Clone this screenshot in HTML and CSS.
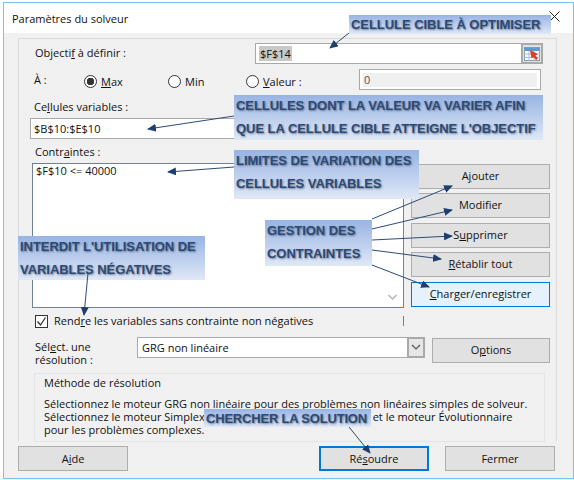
FILE: index.html
```html
<!DOCTYPE html>
<html lang="fr">
<head>
<meta charset="UTF-8" />
<meta name="viewport" content="width=device-width, initial-scale=1" />
<title>Paramètres du solveur</title>
<link rel="stylesheet" href="styles.css">
</head>
<body>

<div class="screen">
  <div class="dialog">
    <div class="titlebar">
      <span>Paramètres du solveur</span>
      <svg class="close" width="11" height="11" viewBox="0 0 11 11"><path d="M0.5 0.5L10.5 10.5M10.5 0.5L0.5 10.5" stroke="#222" fill="none"/></svg>
    </div>

    <div class="panel">
      <div class="row row-objectif">
        <label>Objecti<u>f</u> à définir :</label>
        <div class="field field-objectif">
          <span class="value selected">$F$14</span>
          <span class="picker">
            <svg width="16" height="14" viewBox="0 0 16 14">
              <rect x="0.5" y="0.5" width="15" height="13" fill="#fff" stroke="#7f9db9"/>
              <rect x="1" y="1" width="14" height="3" fill="#5b9bd5"/>
              <path d="M0 7H16M0 10.500H16M5 4V14M10 4V14" stroke="#a9bdd0" fill="none"/>
              <path d="M6 3L14 7L11.500 8.500L14 11.500L12 13L9.500 10L7.500 11.500Z" fill="#d8402c"/>
            </svg>
          </span>
        </div>
      </div>

      <div class="row row-radios">
        <label class="to-label">À :</label>
        <div class="radio radio-max"><span class="dot checked"></span><span><u>M</u>ax</span></div>
        <div class="radio radio-min"><span class="dot"></span><span>Min</span></div>
        <div class="radio radio-val"><span class="dot"></span><span><u>V</u>aleur :</span></div>
        <div class="field field-valeur"><span class="value disabled">0</span></div>
      </div>

      <label class="block-label label-cells">Ce<u>l</u>lules variables :</label>
      <div class="field field-cells"><span class="value">$B$10:$E$10</span></div>

      <label class="block-label label-contraintes">Contr<u>a</u>intes :</label>
      <div class="row row-list">
        <div class="listbox">
          <span class="list-item">$F$10 &lt;= 40000</span>
          <svg class="list-chevron" width="9" height="7" viewBox="0 0 9 7"><path d="M0.500 1L4.500 5L8.500 1" stroke="#b5b5b5" stroke-width="1.500" fill="none"/></svg>
        </div>
        <div class="list-buttons">
          <button>A<u>j</u>outer</button>
          <button>Modifier</button>
          <button>S<u>u</u>pprimer</button>
          <button><u>R</u>établir tout</button>
          <button class="hot"><u>C</u>harger/enregistrer</button>
        </div>
      </div>

      <div class="row row-check">
        <span class="checkbox">
          <svg width="11" height="11" viewBox="0 0 11 11"><path d="M1.500 5.500L4.500 9L9.500 1.500" stroke="#333" stroke-width="1.300" fill="none"/></svg>
        </span>
        <span class="check-text">Rend<u>r</u>e les variables sans contrainte non négatives</span>
        <span class="check-rule"></span>
      </div>

      <div class="row row-select">
        <label class="select-label">Sél<u>e</u>ct. une<br>résolution :</label>
        <div class="field field-select">
          <span class="value">GRG non linéaire</span>
          <span class="select-arrow">
            <svg width="10" height="7" viewBox="0 0 10 7"><path d="M1 1L5 5L9 1" stroke="#555" stroke-width="1.200" fill="none"/></svg>
          </span>
        </div>
        <button class="btn-options">O<u>p</u>tions</button>
      </div>

      <div class="method">
        <div class="method-title">Méthode de résolution</div>
        <p>Sélectionnez le moteur GRG non linéaire pour des problèmes non linéaires simples de solveur.<br>
        Sélectionnez le moteur Simplex<span class="method-gap"></span>et le moteur Évolutionnaire<br>
        pour les problèmes complexes.</p>
      </div>
    </div>

    <div class="footer">
      <button class="btn-foot">A<u>i</u>de</button>
      <button class="btn-foot btn-default">Ré<u>s</u>oudre</button>
      <button class="btn-foot">Fermer</button>
    </div>
  </div>

  <div class="note note-target">CELLULE CIBLE À OPTIMISER</div>
  <div class="note note-cells">CELLULES DONT LA VALEUR VA VARIER AFIN<br>QUE LA CELLULE CIBLE ATTEIGNE L'OBJECTIF</div>
  <div class="note note-limits">LIMITES DE VARIATION DES<br>CELLULES VARIABLES</div>
  <div class="note note-manage">GESTION DES<br>CONTRAINTES</div>
  <div class="note note-negative">INTERDIT L'UTILISATION DE<br>VARIABLES NÉGATIVES</div>
  <div class="note note-solve">CHERCHER LA SOLUTION</div>

  <svg class="arrows" width="574" height="480" viewBox="0 0 574 480">
    <defs>
      <marker id="head" markerWidth="9" markerHeight="8" refX="8" refY="4" orient="auto" markerUnits="userSpaceOnUse">
        <path d="M0 0L9 4L0 8Z" fill="#1d3f6e"/>
      </marker>
    </defs>
    <g stroke="#2b4c78" stroke-width="1" fill="none">
      <path d="M349 33L330 48" marker-end="url(#head)"/>
      <path d="M234 116L148 129" marker-end="url(#head)"/>
      <path d="M234 167L168 172" marker-end="url(#head)"/>
      <path d="M88 273L84 315" marker-end="url(#head)"/>
      <path d="M372 219L452 186" marker-end="url(#head)"/>
      <path d="M372 229L452 210" marker-end="url(#head)"/>
      <path d="M372 240L452 236" marker-end="url(#head)"/>
      <path d="M372 250L441 259" marker-end="url(#head)"/>
      <path d="M372 265L429 287" marker-end="url(#head)"/>
      <path d="M349 427L370 453" marker-end="url(#head)"/>
    </g>
  </svg>
</div>

</body>
</html>
```

FILE: styles.css
```css
* {
  box-sizing: border-box;
}
body {
  margin: 0;
  background: #fff;
  font-family: "Open Sans", "Noto Sans", sans-serif;
  font-size: 11px;
  color: #111;
}
button {
  font: inherit;
  color: #111;
  background: #e1e1e1;
  border: 1px solid #adadad;
  padding: 0;
}
.screen {
  position: relative;
  width: 574px;
  height: 480px;
  overflow: hidden;
}
.dialog {
  width: 571px;
  height: 477px;
  margin: 2px 0 0 3px;
  border: 1px solid #7cc3ec;
  background: repeating-conic-gradient(#eeeeee 0 25%, #f3f3f3 0 50%) 0 0 / 2px 2px;
}
.titlebar {
  height: 30px;
  background: #fff;
  display: flex;
  align-items: center;
  justify-content: space-between;
  padding: 0 13px 0 8px;
}
.close {
  margin-top: -3px;
}
.panel {
  width: 539px;
  height: 403px;
  margin: 5px 0 0 14px;
  border: 1px solid #dadada;
  border-bottom: none;
  padding: 4px 6px 0 11px;
}
.row {
  display: flex;
  align-items: center;
}
.row-objectif {
  height: 21px;
  padding-left: 5px;
}
.row-objectif label {
  padding-bottom: 2px;
}
.field {
  display: flex;
  align-items: center;
  background: #fff;
  border: 1px solid #a9a9a9;
}
.value {
  padding-left: 3px;
}
.field-objectif {
  width: 288px;
  height: 21px;
  margin: 0 7px 0 auto;
  justify-content: space-between;
}
.selected {
  background: #c9c9c9;
  margin-left: 3px;
  padding: 0 1px;
}
.picker {
  width: 22px;
  height: 21px;
  background: #e1e1e1;
  border: 2px solid #a9a9a9;
  margin-right: -1px;
  display: flex;
  align-items: center;
  justify-content: center;
}
.row-radios {
  height: 21px;
  margin-top: 5px;
}
.to-label {
  width: 54px;
  padding: 0 0 1px 4px;
}
.radio {
  display: flex;
  align-items: center;
  gap: 4px;
  padding-top: 3px;
}
.radio-max {
  width: 84px;
}
.radio-min {
  width: 78px;
}
.radio-val {
  width: 113px;
}
.dot {
  width: 13px;
  height: 13px;
  border: 1px solid #333;
  border-radius: 50%;
  background: #fff;
}
.dot.checked {
  background: radial-gradient(circle, #333 0 3.5px, #fff 4px);
}
.field-valeur {
  width: 182px;
  height: 21px;
  padding: 3px 3px;
}
.disabled {
  display: block;
  width: 100%;
  background: #f0f0f0;
  color: #555;
  padding-left: 1px;
  line-height: 14px;
}
.block-label {
  display: block;
  line-height: 16px;
  padding-left: 4px;
}
.label-cells {
  margin-top: 9px;
}
.field-cells {
  width: 513px;
  height: 21px;
  margin-top: 3px;
}
.label-contraintes {
  margin-top: 5px;
  padding-left: 5px;
}
.row-list {
  align-items: flex-start;
  margin-top: 3px;
}
.listbox {
  position: relative;
  width: 372px;
  height: 145px;
  margin-left: 2px;
  background: #fff;
  border: 1px solid #6f8298;
  padding: 0 3px;
  line-height: 14px;
}
.list-chevron {
  position: absolute;
  right: 6px;
  bottom: 6px;
}
.list-buttons {
  display: flex;
  flex-direction: column;
  gap: 4.4px;
  width: 139px;
  margin: 1px 0 0 7px;
}
.list-buttons button {
  height: 25px;
  padding-bottom: 2px;
}
.list-buttons .hot {
  background: #e5f1fb;
  border-color: #0078d7;
}
.row-check {
  height: 14px;
  margin-top: 6px;
  padding-left: 5px;
  gap: 6px;
}
.check-text {
  padding-bottom: 2px;
}
.checkbox {
  width: 13px;
  height: 13px;
  background: #fff;
  border: 1px solid #333;
  display: flex;
  align-items: center;
  justify-content: center;
}
.check-rule {
  width: 1px;
  height: 10px;
  margin-left: auto;
  margin-right: 146px;
  background: #6f8298;
}
.row-select {
  align-items: flex-start;
  margin-top: 9px;
}
.select-label {
  width: 107px;
  padding: 3px 0 0 5px;
  line-height: 13px;
}
.field-select {
  width: 288px;
  height: 21px;
  justify-content: space-between;
}
.field-select .value {
  padding-left: 4px;
}
.select-arrow {
  width: 18px;
  height: 21px;
  margin-right: -1px;
  background: #e6e6e6;
  border: 2px solid #a9a9a9;
  display: flex;
  align-items: center;
  justify-content: center;
}
.btn-options {
  width: 118px;
  height: 25px;
  margin: 1px 0 0 7px;
  padding-bottom: 2px;
}
.method {
  width: 511px;
  height: 69px;
  margin: 7px 0 0 4px;
  border: 1px solid #e4e4e4;
  padding: 1px 9px;
}
.method-title {
  line-height: 16px;
}
.method p {
  margin: 6px 0 0;
  line-height: 13px;
}
.method-gap {
  display: inline-block;
  width: 168px;
}
.footer {
  display: flex;
  margin: 5px 0 0 14px;
}
.btn-foot {
  width: 110px;
  height: 25px;
}
.btn-default {
  margin: 0 16px 0 191px;
  border: 2px solid #0078d7;
}
.note {
  position: absolute;
  background: linear-gradient(#98b4e3, #dfe8f7);
  color: #2b4a75;
  font-family: "Liberation Sans", sans-serif;
  font-size: 13px;
  font-weight: bold;
  line-height: 22.5px;
  letter-spacing: -0.05px;
  padding-left: 2px;
  white-space: nowrap;
  text-shadow: 1px 1px 2px rgba(40, 50, 70, .55);
}
.note-target {
  left: 349px;
  top: 15px;
  width: 202px;
  height: 19px;
  line-height: 19px;
}
.note-cells {
  left: 234px;
  top: 95px;
  width: 309px;
  height: 45px;
}
.note-limits {
  left: 234px;
  top: 150px;
  width: 185px;
  height: 49px;
}
.note-manage {
  left: 265px;
  top: 220px;
  width: 107px;
  height: 46px;
}
.note-negative {
  left: 18px;
  top: 236px;
  width: 187px;
  height: 44px;
}
.note-solve {
  left: 204px;
  top: 409px;
  width: 167px;
  height: 18px;
  line-height: 19px;
  letter-spacing: -0.2px;
}
.arrows {
  position: absolute;
  left: 0;
  top: 0;
  pointer-events: none;
}
```
